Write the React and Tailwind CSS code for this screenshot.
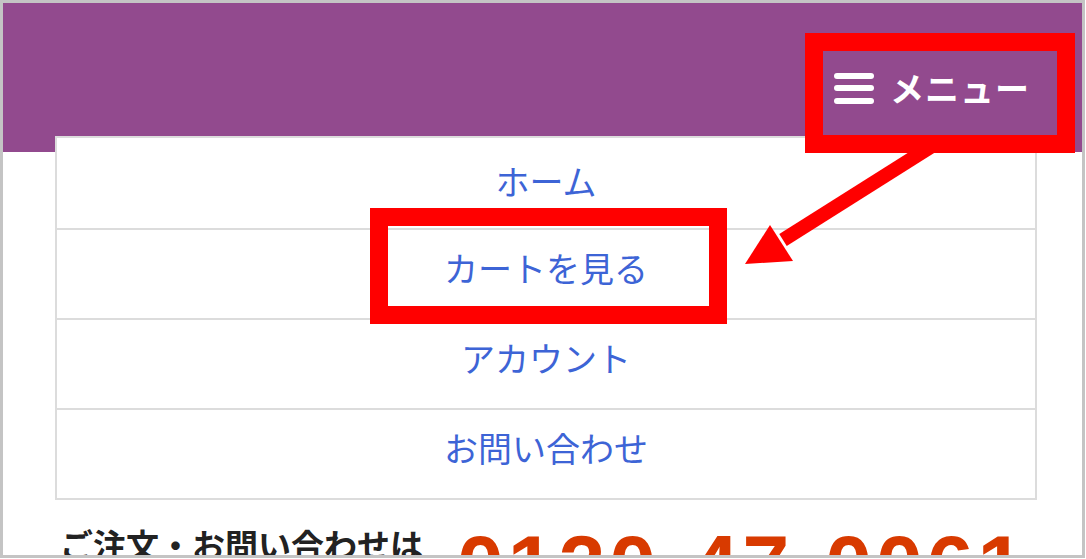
const MENU_ITEMS = ['ホーム', 'カートを見る', 'アカウント', 'お問い合わせ'];

const JP = { fontFamily: '"Noto Sans CJK JP", "Noto Sans", sans-serif' };

function Hamburger() {
  return (
    <div className="flex flex-col gap-[6.5px] w-[40px]">
      <span className="block h-[6px] rounded-full bg-white" />
      <span className="block h-[6px] rounded-full bg-white" />
      <span className="block h-[6px] rounded-full bg-white" />
    </div>
  );
}

function Annotations() {
  return (
    <>
      {/* red highlight boxes */}
      <div className="absolute left-[805px] top-[33px] w-[270px] h-[120px] border-[18px] border-[#ff0000]" />
      <div className="absolute left-[370px] top-[208px] w-[357px] h-[116px] border-[18px] border-[#ff0000]" />
      {/* arrow */}
      <svg className="absolute inset-0 pointer-events-none" width="1086" height="559" viewBox="0 0 1086 559">
        <line x1="932" y1="146" x2="783" y2="240" stroke="#ff0000" strokeWidth="14" />
        <polygon points="745,264 770,225 793,261" fill="#ff0000" />
      </svg>
    </>
  );
}

export default function App() {
  return (
    <div className="relative w-[1086px] h-[559px] overflow-hidden bg-white" style={JP}>
      <div className="w-[1085px] h-[558px] border-[3px] border-[#c4c4c4] overflow-hidden flex flex-col">
        {/* Header */}
        <header className="h-[149px] shrink-0 bg-[#924a8e] flex justify-end pt-[68px] pr-[52px]">
          <div className="flex items-center gap-[16px] h-[34px]">
            <Hamburger />
            <span className="text-white font-bold text-[34px] leading-none tracking-[1px]">メニュー</span>
          </div>
        </header>

        {/* Dropdown menu */}
        <nav className="relative -mt-[16px] ml-[52px] w-[982px] bg-white border-2 border-[#dcdcdc]">
          {MENU_ITEMS.map((item, i) => (
            <div
              key={item}
              className={
                'flex items-center justify-center text-[34px] leading-none text-[#3d64d6] h-[90px] ' +
                (i === 0 ? 'pb-[4px]' : 'pb-[13px] border-t-2 border-[#dcdcdc]')
              }
            >
              {item}
            </div>
          ))}
        </nav>

        {/* Contact line */}
        <div className="flex items-start pl-[57px] pt-[24px] gap-[34px]">
          <span className="text-[33px] font-bold leading-none text-[#222] pt-[4px]">ご注文・お問い合わせは</span>
          <span
            className="text-[84px] font-bold leading-none text-[#d83a00] tracking-[4px] -mt-[1px]"
            style={{ fontFamily: '"Liberation Sans", Arial, sans-serif' }}
          >
            0120-47-0061
          </span>
        </div>
      </div>
      <Annotations />
    </div>
  );
}
